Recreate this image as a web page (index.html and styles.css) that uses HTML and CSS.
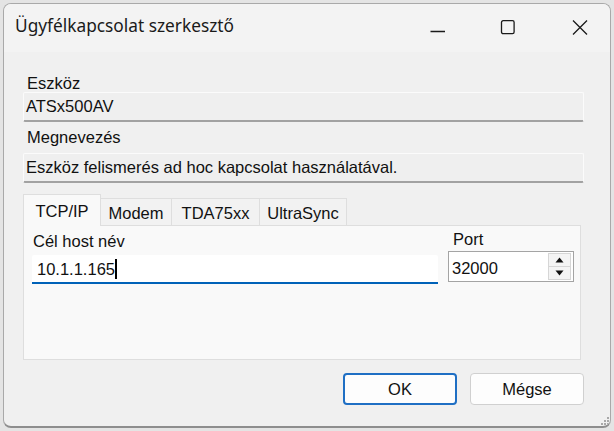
FILE: index.html
```html
<!DOCTYPE html>
<html lang="hu">
<head>
<meta charset="utf-8">
<title>Ügyfélkapcsolat szerkesztő</title>
<link rel="stylesheet" href="styles.css">
</head>
<body>
<div class="window">
  <div class="titlebar">
    <span class="title">Ügyfélkapcsolat szerkesztő</span>
    <div class="controls">
      <svg class="ctl ctl-min" width="15" height="15" viewBox="0 0 15 15"><path d="M0.5 11.5H15" stroke="#1a1a1a" stroke-width="1.3" fill="none"/></svg>
      <svg class="ctl ctl-max" width="15" height="15" viewBox="0 0 15 15"><rect x="1.5" y="0.7" width="12.6" height="13" rx="1.6" stroke="#1a1a1a" stroke-width="1.3" fill="none"/></svg>
      <svg class="ctl ctl-close" width="16" height="16" viewBox="0 0 16 16"><path d="M1 0.5L15 14.5M15 0.5L1 14.5" stroke="#1a1a1a" stroke-width="1.3" fill="none"/></svg>
    </div>
  </div>
  <div class="content">
    <div class="label label-first">Eszköz</div>
    <div class="field">ATSx500AV</div>
    <div class="label label-second">Megnevezés</div>
    <div class="field">Eszköz felismerés ad hoc kapcsolat használatával.</div>
    <div class="tabs">
      <div class="tabstrip">
        <div class="tab tab-active tab-tcp">TCP/IP</div>
        <div class="tab tab-modem">Modem</div>
        <div class="tab tab-tda">TDA75xx</div>
        <div class="tab tab-ultra">UltraSync</div>
      </div>
      <div class="panel">
        <div class="host">
          <div class="plabel">Cél host név</div>
          <div class="input">10.1.1.165<span class="caret"></span></div>
        </div>
        <div class="port">
          <div class="plabel plabel-port">Port</div>
          <div class="spin">
            <span class="spin-value">32000</span>
            <div class="spin-btns">
              <div class="spin-btn"><svg width="9" height="6" viewBox="0 0 9 6"><path d="M4.5 0.5L8.5 5.5H0.5Z" fill="#111"/></svg></div>
              <div class="spin-btn"><svg width="9" height="6" viewBox="0 0 9 6"><path d="M0.5 0.5H8.5L4.5 5.5Z" fill="#111"/></svg></div>
            </div>
          </div>
        </div>
      </div>
    </div>
    <div class="buttons">
      <button class="btn btn-default">OK</button>
      <button class="btn">Mégse</button>
    </div>
  </div>
  <svg class="grip" width="10" height="10" viewBox="0 0 10 10">
    <rect x="7" y="1" width="2" height="2" fill="#a8a8a8"/>
    <rect x="4" y="4" width="2" height="2" fill="#a8a8a8"/>
    <rect x="7" y="4" width="2" height="2" fill="#a8a8a8"/>
    <rect x="1" y="7" width="2" height="2" fill="#a8a8a8"/>
    <rect x="4" y="7" width="2" height="2" fill="#a8a8a8"/>
    <rect x="7" y="7" width="2" height="2" fill="#a8a8a8"/>
  </svg>
</div>
</body>
</html>
```

FILE: styles.css
```css
* { box-sizing: border-box; }

html, body {
  margin: 0;
  padding: 0;
}

body {
  background: #e4e4e4;
  width: 614px;
  height: 431px;
  overflow: hidden;
  padding: 3px 3px 0 3px;
  font-family: "Liberation Sans", Arial, sans-serif;
  font-size: 16.5px;
  color: #111;
}

.window {
  position: relative;
  width: 608px;
  height: 425px;
  background: #f0f0f0;
  border: 1px solid #a9a9a9;
  border-bottom: 2px solid #8e8e8e;
  border-radius: 8px;
  overflow: hidden;
}

.titlebar {
  height: 48px;
  background: #f3f3f3;
  display: flex;
  align-items: flex-start;
  padding: 11px 0 0 11px;
}

.title {
  font-family: "Noto Sans", "Open Sans", sans-serif;
  font-size: 17.3px;
  line-height: 22px;
  color: #1a1a1a;
}

.controls {
  margin-left: auto;
  display: flex;
  align-items: flex-start;
  padding-top: 5px;
  padding-right: 22px;
}

.ctl { display: block; }
.ctl-min { margin-right: 55px; }
.ctl-max { margin-right: 57px; }

.content {
  padding: 22px 26px 0 19px;
}

.label {
  line-height: 18px;
  padding-left: 4px;
}

.label-second {
  margin-top: 6px;
  margin-bottom: 7px;
}

.field {
  height: 30px;
  background: #efefef;
  border: 1px solid #fbfbfb;
  border-bottom: 2px solid #a2a2a2;
  border-radius: 2px;
  padding: 4px 2px 5px;
  line-height: 18px;
}

.tabs {
  margin-top: 11px;
  margin-right: 3px;
}

.tabstrip {
  display: flex;
  align-items: flex-end;
  height: 31px;
}

.tab {
  height: 27px;
  line-height: 18px;
  padding-top: 5px;
  text-align: center;
  background: #f2f2f2;
  border: 1px solid #dedede;
  border-bottom: none;
  border-left: none;
}

.tab-active {
  height: 32px;
  padding-top: 7px;
  background: #f9f9f9;
  border-left: 1px solid #dedede;
  margin-bottom: -1px;
  position: relative;
  z-index: 1;
}

.tab-tcp { width: 78px; }
.tab-modem { width: 71px; }
.tab-tda { width: 88px; }
.tab-ultra { width: 87px; }

.panel {
  height: 135px;
  background: #f9f9f9;
  border: 1px solid #dedede;
  display: flex;
  align-items: flex-start;
  padding: 6px 6px 0 8px;
}

.host {
  flex: 1;
}

.plabel {
  line-height: 18px;
  padding-left: 1px;
  margin-bottom: 5px;
}

.input {
  height: 29px;
  background: #ffffff;
  border-bottom: 2px solid #0062b8;
  border-radius: 2px 2px 0 0;
  padding: 5px 5px 4px;
  line-height: 18px;
  display: flex;
  align-items: center;
}

.caret {
  display: inline-block;
  width: 1.5px;
  height: 20px;
  background: #000;
  margin-left: 0;
}

.port {
  width: 126px;
  margin-left: 10px;
  margin-top: -2px;
}

.plabel-port {
  padding-left: 5px;
  margin-bottom: 3px;
}

.spin {
  height: 31px;
  background: #ffffff;
  border: 1px solid #a4a4a4;
  display: flex;
  align-items: center;
  padding: 0 1px 0 3px;
}

.spin-value {
  line-height: 18px;
  flex: 1;
  padding-top: 2px;
}

.spin-btns {
  width: 23px;
  height: 27px;
  display: flex;
  flex-direction: column;
  margin-right: 1px;
}

.spin-btn {
  flex: 1;
  background: #f4f4f4;
  border: 1px solid #d6d6d6;
  display: flex;
  align-items: center;
  justify-content: center;
}

.spin-btn + .spin-btn {
  border-top: none;
}

.spin-btn svg { display: block; }

.buttons {
  display: flex;
  justify-content: flex-end;
  gap: 13px;
  margin-top: 13px;
}

.btn {
  width: 114px;
  height: 32px;
  background: #fdfdfd;
  border: 1px solid #d0d0d0;
  border-radius: 4px;
  font-family: "Liberation Sans", Arial, sans-serif;
  font-size: 16.5px;
  color: #111;
  padding: 0;
}

.btn-default {
  border: 2px solid #1f6fc4;
}

.grip {
  position: absolute;
  right: 0;
  bottom: 0;
  display: block;
}
```
